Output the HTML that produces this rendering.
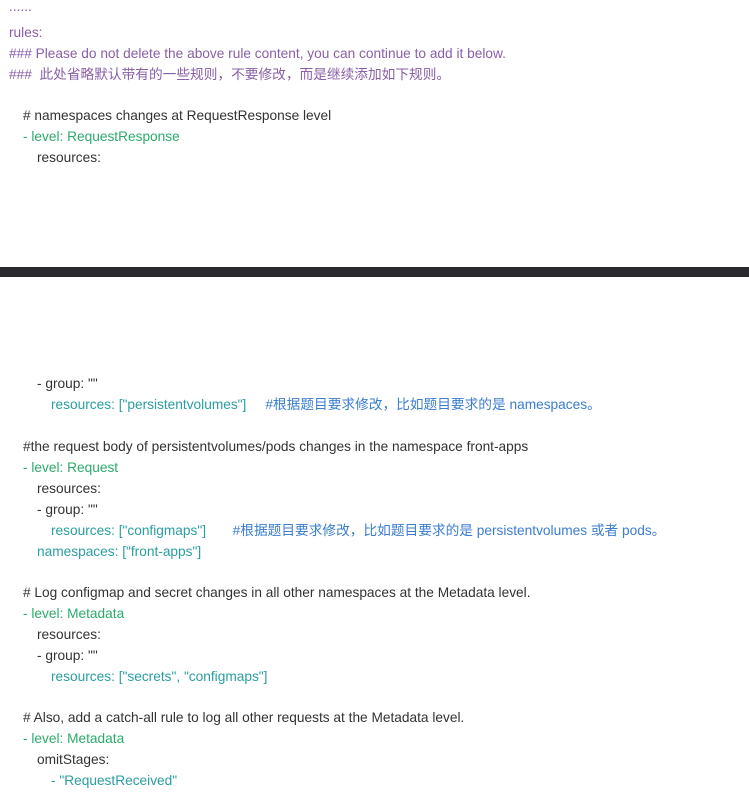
<!DOCTYPE html><html><head><meta charset="utf-8"><style>
body{margin:0;width:749px;height:802px;background:#fff;position:relative;overflow:hidden;font-family:"Liberation Sans","Noto Sans CJK SC",sans-serif;font-size:13.7px;color:#333}
.l{position:absolute;white-space:pre;line-height:16px}
.p{color:#8a5fa6}.g{color:#2bab6c}.t{color:#2a9ea0}.b{color:#3b7dd0}
.bar{position:absolute;left:0;top:267px;width:749px;height:10px;background:#2b2b2f}
</style></head><body>
<div class="l p" style="left:9px;top:-1px">......</div>
<div class="l p" style="left:9px;top:25px">rules:</div>
<div class="l p" style="left:9px;top:46px">### Please do not delete the above rule content, you can continue to add it below.</div>
<div class="l p" style="left:9px;top:67px">###  此处省略默认带有的一些规则，不要修改，而是继续添加如下规则。</div>
<div class="l" style="left:23px;top:108px"># namespaces changes at RequestResponse level</div>
<div class="l g" style="left:23px;top:129px">- level: RequestResponse</div>
<div class="l" style="left:37px;top:150px">resources:</div>
<div class="bar"></div>
<div class="l" style="left:37px;top:376px">- group: ""</div>
<div class="l t" style="left:51px;top:397px">resources: ["persistentvolumes"]     <span class="b">#根据题目要求修改，比如题目要求的是 namespaces。</span></div>
<div class="l" style="left:23px;top:439px">#the request body of persistentvolumes/pods changes in the namespace front-apps</div>
<div class="l g" style="left:23px;top:460px">- level: Request</div>
<div class="l" style="left:37px;top:481px">resources:</div>
<div class="l" style="left:37px;top:502px">- group: ""</div>
<div class="l t" style="left:51px;top:523px">resources: ["configmaps"]       <span class="b">#根据题目要求修改，比如题目要求的是 persistentvolumes 或者 pods。</span></div>
<div class="l t" style="left:37px;top:544px">namespaces: ["front-apps"]</div>
<div class="l" style="left:23px;top:585px"># Log configmap and secret changes in all other namespaces at the Metadata level.</div>
<div class="l g" style="left:23px;top:606px">- level: Metadata</div>
<div class="l" style="left:37px;top:627px">resources:</div>
<div class="l" style="left:37px;top:648px">- group: ""</div>
<div class="l t" style="left:51px;top:669px">resources: ["secrets", "configmaps"]</div>
<div class="l" style="left:23px;top:710px"># Also, add a catch-all rule to log all other requests at the Metadata level.</div>
<div class="l g" style="left:23px;top:731px">- level: Metadata</div>
<div class="l" style="left:37px;top:752px">omitStages:</div>
<div class="l t" style="left:51px;top:773px">- "RequestReceived"</div>
</body></html>
